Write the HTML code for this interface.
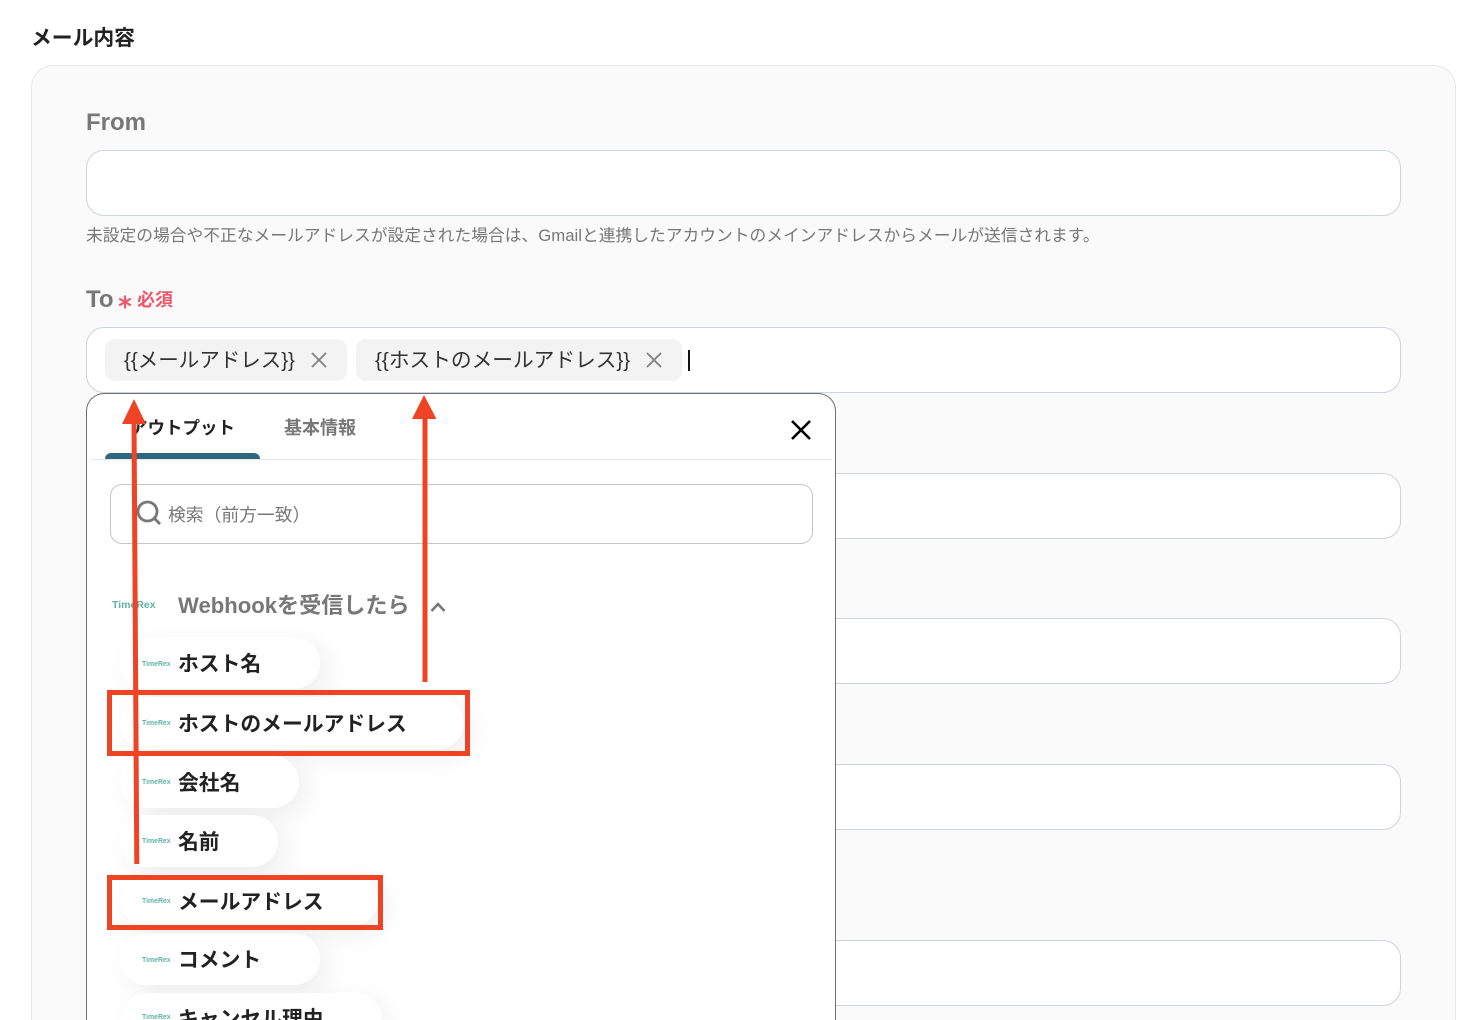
<!DOCTYPE html>
<html lang="ja"><head><meta charset="utf-8"><title>メール内容</title>
<style>
html,body{margin:0;padding:0;background:#fff;width:1474px;height:1020px;overflow:hidden}
#r{position:relative;width:1474px;height:1020px;overflow:hidden;font-family:"Liberation Sans","Noto Sans CJK JP",sans-serif;color:#222}
.a{position:absolute;white-space:nowrap}
.inp{position:absolute;left:86px;width:1313px;height:64px;background:#fff;border:1px solid #cfd3da;border-radius:18px}
.chip{position:absolute;top:339px;height:42px;background:#f3f3f3;border-radius:10px}
.t{position:absolute;white-space:nowrap;line-height:30px}
.pill{position:absolute;left:120px;height:52px;background:#fff;border-radius:26px;box-shadow:8px 8px 26px rgba(0,0,0,.07)}
.pt{position:absolute;left:178px;font-size:20.8px;font-weight:700;line-height:30px;white-space:nowrap;color:#222}
.lg{position:absolute;left:142px;font-size:6.9px;line-height:8px;color:#5fb3a6;white-space:nowrap;font-weight:700}
</style></head><body><div id="r">
<div class="a" style="left:31px;top:24px;font-size:20.8px;font-weight:700;line-height:30px">メール内容</div>
<div class="a" style="left:31px;top:65px;width:1423px;height:955px;background:#fafafa;border:1px solid #e8e8e8;border-bottom:0;border-radius:22px 22px 0 0"></div>
<div class="a" style="left:86px;top:108px;font-size:24px;font-weight:700;color:#777;line-height:30px">From</div>
<div class="inp" style="top:150px"></div>
<div class="a" style="left:86px;top:224px;font-size:16.75px;color:#777;line-height:24px">未設定の場合や不正なメールアドレスが設定された場合は、Gmailと連携したアカウントのメインアドレスからメールが送信されます。</div>
<div class="a" style="left:86px;top:285px;font-size:24px;font-weight:700;color:#777;line-height:30px">To</div>
<svg class="a" style="left:118px;top:295px" width="14" height="14" viewBox="0 0 14 14"><path d="M7 0.5V13.500M1.200 3.600L12.800 10.400M12.800 3.600L1.200 10.400" stroke="#f0566a" stroke-width="2.200" fill="none"/></svg>
<div class="a" style="left:137px;top:285px;font-size:18px;font-weight:700;color:#f0566a;line-height:30px">必須</div>
<div class="inp" style="top:327px"></div>
<div class="chip" style="left:105px;width:242px"></div>
<div class="t" style="left:124px;top:346px;font-size:20.5px;color:#333">{{メールアドレス}}</div>
<svg class="a" style="left:311px;top:352px" width="16" height="16" viewBox="0 0 16 16"><path d="M1 1L15 15M15 1L1 15" stroke="#808080" stroke-width="1.800" fill="none"/></svg>
<div class="chip" style="left:356px;width:326px"></div>
<div class="t" style="left:375px;top:346px;font-size:20.7px;color:#333">{{ホストのメールアドレス}}</div>
<svg class="a" style="left:646px;top:352px" width="16" height="16" viewBox="0 0 16 16"><path d="M1 1L15 15M15 1L1 15" stroke="#808080" stroke-width="1.800" fill="none"/></svg>
<div class="a" style="left:688px;top:350px;width:2px;height:21px;background:#111"></div>
<div class="inp" style="top:473px"></div>
<div class="inp" style="top:618px"></div>
<div class="inp" style="top:764px"></div>
<div class="inp" style="top:940px"></div>

<div class="a" style="left:86px;top:393px;width:748px;height:627px;background:#fff;border:1px solid #6f6f6f;border-bottom:0;border-radius:18px 18px 0 0"></div>
<div class="a" style="left:130px;top:413px;font-size:17.500px;font-weight:700;color:#222;line-height:30px">アウトプット</div>
<div class="a" style="left:284px;top:413px;font-size:18px;font-weight:700;color:#777;line-height:30px">基本情報</div>
<div class="a" style="left:92px;top:459px;width:740px;height:1px;background:#e6e6e6"></div>
<div class="a" style="left:105px;top:453px;width:155px;height:6px;background:#2e6780;border-radius:6px 6px 0 0"></div>
<svg class="a" style="left:790px;top:419px" width="22" height="22" viewBox="0 0 22 22"><path d="M2 2L20 20M20 2L2 20" stroke="#000" stroke-width="2.600" fill="none"/></svg>
<div class="a" style="left:110px;top:484px;width:701px;height:58px;background:#fff;border:1px solid #c6c6c6;border-radius:12px"></div>
<svg class="a" style="left:136px;top:500px" width="26" height="26" viewBox="0 0 26 26"><circle cx="11.500" cy="11.500" r="9.500" stroke="#777" stroke-width="2.800" fill="none"/><path d="M18.500 18.500L24 24" stroke="#777" stroke-width="2.800" fill="none"/></svg>
<div class="a" style="left:168px;top:499.500px;font-size:17.800px;color:#777;line-height:30px">検索（前方一致）</div>

<div class="a" style="left:112px;top:598px;font-size:10.500px;line-height:14px;color:#5fb3a6;font-weight:700">TimeRex</div>
<div class="a" style="left:178px;top:591px;font-size:22.100px;font-weight:700;color:#777;line-height:30px">Webhookを受信したら</div>
<svg class="a" style="left:430px;top:601px" width="16" height="12" viewBox="0 0 16 12"><path d="M1.500 10L8 3L14.500 10" stroke="#777" stroke-width="2.600" fill="none"/></svg>

<div class="pill" style="top:637px;width:200px"></div>
<div class="pill" style="top:697px;width:344px"></div>
<div class="pill" style="top:756px;width:179px"></div>
<div class="pill" style="top:815px;width:158px"></div>
<div class="pill" style="top:874px;width:258px"></div>
<div class="pill" style="top:933px;width:200px"></div>
<div class="pill" style="top:993px;width:262px;height:27px;border-radius:26px 26px 0 0"></div>
<div class="lg" style="top:661px">TimeRex</div><div class="pt" style="top:650px">ホスト名</div>
<div class="lg" style="top:720px">TimeRex</div><div class="pt" style="top:710px">ホストのメールアドレス</div>
<div class="lg" style="top:779px">TimeRex</div><div class="pt" style="top:769px">会社名</div>
<div class="lg" style="top:838px">TimeRex</div><div class="pt" style="top:828px">名前</div>
<div class="lg" style="top:898px">TimeRex</div><div class="pt" style="top:888px">メールアドレス</div>
<div class="lg" style="top:957px">TimeRex</div><div class="pt" style="top:946px">コメント</div>
<div class="lg" style="top:1014px;height:6px;overflow:hidden">TimeRex</div><div class="pt" style="top:1005px;height:15px;overflow:hidden">キャンセル理由</div>

<svg class="a" style="left:0;top:0" width="1474" height="1020" viewBox="0 0 1474 1020">
<rect x="109.500" y="692.500" width="358" height="61" fill="none" stroke="#ee4425" stroke-width="5"/>
<rect x="109.500" y="877.500" width="271" height="50" fill="none" stroke="#ee4425" stroke-width="5"/>
<path d="M136.800 864L134 420" stroke="#ee4425" stroke-width="5" fill="none"/>
<path d="M134 399L146 424H122Z" fill="#ee4425"/>
<path d="M425 682V415" stroke="#ee4425" stroke-width="5" fill="none"/>
<path d="M424 395L436.500 419H412Z" fill="#ee4425"/>
</svg>
</div></body></html>
